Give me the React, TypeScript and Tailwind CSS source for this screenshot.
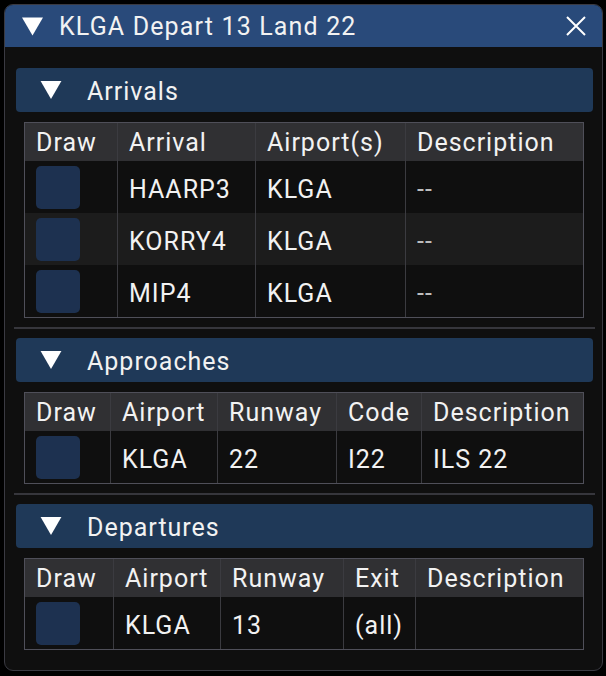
import type { ReactNode } from "react";

const arrivals = [
  { name: "HAARP3", airport: "KLGA", desc: "--" },
  { name: "KORRY4", airport: "KLGA", desc: "--" },
  { name: "MIP4", airport: "KLGA", desc: "--" },
];

function Triangle({ className }: { className?: string }) {
  return (
    <svg viewBox="0 0 22 19" className={className}>
      <polygon points="0,0 22,0 11,19" fill="#ffffff" />
    </svg>
  );
}

function Section({ title, children }: { title: string; children: ReactNode }) {
  return (
    <div>
      <div className="flex h-[44px] items-center rounded-[4px] bg-[#1f3958]">
        <Triangle className="ml-[24px] h-[18px] w-[22px]" />
        <span className="ml-[25px] pt-[4px]">{title}</span>
      </div>
      <div className="mt-[10px] ml-[8px] mr-[9px]">{children}</div>
    </div>
  );
}

function Checkbox() {
  return <div className="h-[43px] w-[44px] rounded-[5px] bg-[#1d3150]" />;
}

function Table({ cols, head, rows }: { cols: string; head: string[]; rows: ReactNode[][] }) {
  return (
    <div className="border border-[#4f4f59]">
      <div className={`grid h-[38px] bg-[#303033] ${cols}`}>
        {head.map((h, i) => (
          <div key={h} className={`flex items-center pl-[11px] pt-[1px] ${i > 0 ? "border-l border-[#3b3b40]" : ""}`}>
            {h}
          </div>
        ))}
      </div>
      {rows.map((r, ri) => (
        <div key={ri} className={`grid h-[52px] ${cols} ${ri % 2 === 1 ? "bg-[#1c1c1c]" : "bg-[#0f0f0f]"}`}>
          {r.map((c, i) => (
            <div key={i} className={`flex items-center pl-[11px] ${i > 0 ? "border-l border-[#3b3b40] pt-[5px]" : ""}`}>
              {c}
            </div>
          ))}
        </div>
      ))}
    </div>
  );
}

function Separator() {
  return <div className="-mx-[2px] my-[9px] h-[2px] bg-[#36363c]" />;
}

export default function App() {
  return (
    <main
      className="min-h-screen bg-black p-[4px] text-[25px] tracking-[1px] text-[#f2f2f2]"
      style={{ fontFamily: "Roboto, 'Liberation Sans', sans-serif" }}
    >
      <div className="flex h-[667px] w-[599px] flex-col overflow-hidden rounded-[9px] border border-[#3a3a42] bg-[#0f0f0f]">
        <div className="flex h-[42px] shrink-0 items-center bg-[#294a7a]">
          <Triangle className="ml-[17px] h-[19px] w-[21px]" />
          <span className="ml-[16px] pt-[2px] tracking-[1.15px]">KLGA Depart 13 Land 22</span>
          <svg viewBox="0 0 20 20" className="ml-auto mr-[16px] h-[20px] w-[20px]">
            <path d="M1 1 L19 19 M19 1 L1 19" stroke="#ffffff" strokeWidth="2" />
          </svg>
        </div>
        <div className="pl-[11px] pr-[9px] pt-[21px]">
          <Section title="Arrivals">
            <Table
              cols="grid-cols-[92px_138px_150px_1fr]"
              head={["Draw", "Arrival", "Airport(s)", "Description"]}
              rows={arrivals.map((a) => [<Checkbox />, a.name, a.airport, <span className="text-[#bdbdbd]">{a.desc}</span>])}
            />
          </Section>
          <Separator />
          <Section title="Approaches">
            <Table
              cols="grid-cols-[85px_107px_119px_85px_1fr]"
              head={["Draw", "Airport", "Runway", "Code", "Description"]}
              rows={[[<Checkbox />, "KLGA", "22", "I22", "ILS 22"]]}
            />
          </Section>
          <Separator />
          <Section title="Departures">
            <Table
              cols="grid-cols-[88px_107px_123px_72px_1fr]"
              head={["Draw", "Airport", "Runway", "Exit", "Description"]}
              rows={[[<Checkbox />, "KLGA", "13", "(all)", ""]]}
            />
          </Section>
        </div>
      </div>
    </main>
  );
}
